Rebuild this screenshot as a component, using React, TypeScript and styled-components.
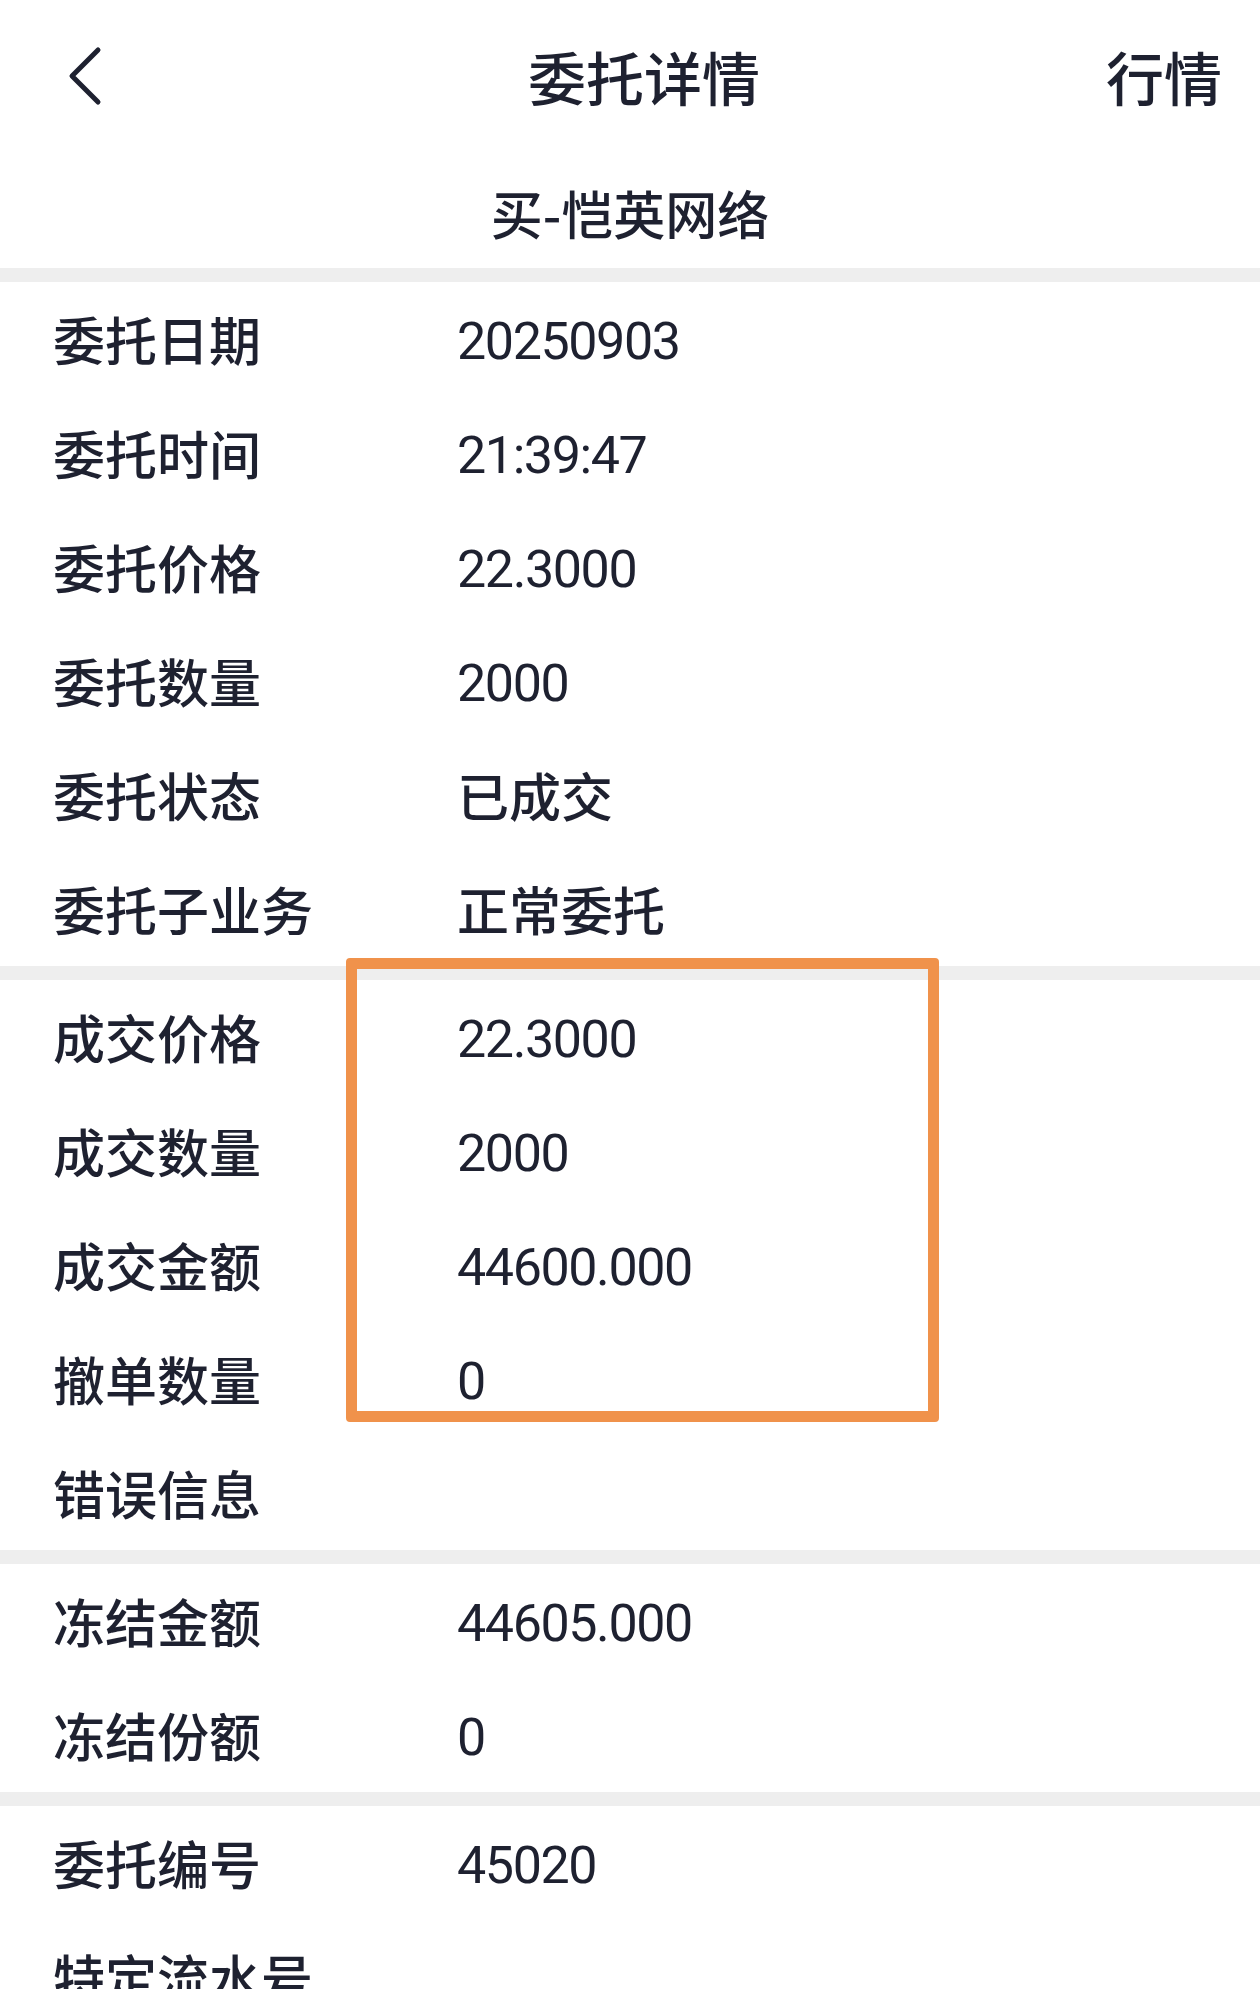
import React from "react";
import styled, { createGlobalStyle } from "styled-components";

interface Item {
  label: string;
  value?: string;
}

const GlobalStyle = createGlobalStyle`
  body {
    margin: 0;
    background: #ffffff;
    font-family: "Noto Sans CJK SC", "Noto Sans", sans-serif;
    color: #1e2130;
  }
`;

const Page = styled.div`
  position: relative;
  width: 1260px;
  min-height: 1989px;
  background: #ffffff;
  overflow: hidden;
`;

const NavBar = styled.div`
  height: 152px;
  display: grid;
  grid-template-columns: 1fr auto 1fr;
  align-items: center;
  padding: 0 38px 0 66px;
`;

const BackButton = styled.div`
  display: flex;
  align-items: center;
  height: 60px;
`;

const Title = styled.div`
  font-size: 58px;
  font-weight: 500;
  line-height: 1;
`;

const NavAction = styled.div`
  justify-self: end;
  font-size: 58px;
  font-weight: 500;
  line-height: 1;
`;

const SubTitle = styled.div`
  height: 116px;
  box-sizing: border-box;
  padding-top: 4px;
  display: flex;
  align-items: center;
  justify-content: center;
  font-size: 52px;
  font-weight: 500;
`;

const Divider = styled.div`
  height: 14px;
  background: #eeeeee;
`;

const Section = styled.div`
  display: flex;
  flex-direction: column;
`;

const Row = styled.div`
  height: 114px;
  display: grid;
  grid-template-columns: 404px 1fr;
  align-items: center;
  padding-left: 53px;
`;

const Label = styled.div`
  font-size: 52px;
  font-weight: 500;
  line-height: 1;
`;

const Value = styled.div<{ $numeric: boolean }>`
  font-family: ${(p) =>
    p.$numeric ? '"Roboto", "Noto Sans CJK SC", sans-serif' : '"Noto Sans CJK SC", sans-serif'};
  font-size: 52px;
  font-weight: ${(p) => (p.$numeric ? 400 : 500)};
  line-height: 1;
  padding-top: ${(p) => (p.$numeric ? "6px" : "0")};
  letter-spacing: ${(p) => (p.$numeric ? "-1.4px" : "0")};
`;

const Highlight = styled.div`
  position: absolute;
  left: 346px;
  top: 958px;
  width: 593px;
  height: 464px;
  box-sizing: border-box;
  border: 11px solid #f0924b;
  border-radius: 4px;
  pointer-events: none;
`;

const sections: Item[][] = [
  [
    { label: "委托日期", value: "20250903" },
    { label: "委托时间", value: "21:39:47" },
    { label: "委托价格", value: "22.3000" },
    { label: "委托数量", value: "2000" },
    { label: "委托状态", value: "已成交" },
    { label: "委托子业务", value: "正常委托" },
  ],
  [
    { label: "成交价格", value: "22.3000" },
    { label: "成交数量", value: "2000" },
    { label: "成交金额", value: "44600.000" },
    { label: "撤单数量", value: "0" },
    { label: "错误信息" },
  ],
  [
    { label: "冻结金额", value: "44605.000" },
    { label: "冻结份额", value: "0" },
  ],
  [
    { label: "委托编号", value: "45020" },
    { label: "特定流水号" },
  ],
];

const isNumeric = (v?: string) => !!v && /^[0-9.:]+$/.test(v);

const App = () => {
  return (
    <Page>
      <GlobalStyle />
      <NavBar>
        <BackButton>
          <svg width="40" height="60" viewBox="0 0 40 60">
            <polyline
              points="32,4 6,30 32,56"
              fill="none"
              stroke="#1e2130"
              strokeWidth="5"
              strokeLinecap="round"
              strokeLinejoin="round"
            />
          </svg>
        </BackButton>
        <Title>委托详情</Title>
        <NavAction>行情</NavAction>
      </NavBar>
      <SubTitle>买-恺英网络</SubTitle>
      {sections.map((items, si) => (
        <React.Fragment key={si}>
          <Divider />
          <Section>
            {items.map((item) => (
              <Row key={item.label}>
                <Label>{item.label}</Label>
                <Value $numeric={isNumeric(item.value)}>{item.value}</Value>
              </Row>
            ))}
          </Section>
        </React.Fragment>
      ))}
      <Highlight />
    </Page>
  );
};

export default App;
